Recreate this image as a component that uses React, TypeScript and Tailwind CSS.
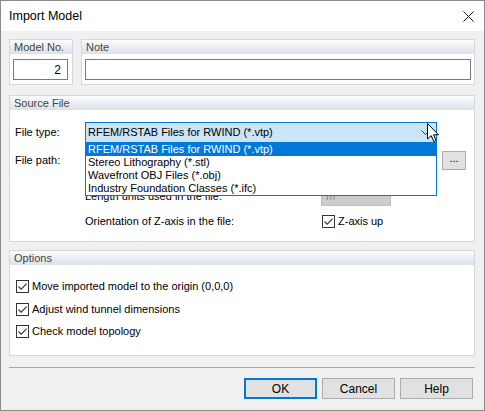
import React from 'react';

const FONT = "font-['Liberation_Sans',Arial,sans-serif]";

const LIST_ITEMS = [
  'RFEM/RSTAB Files for RWIND (*.vtp)',
  'Stereo Lithography (*.stl)',
  'Wavefront OBJ Files (*.obj)',
  'Industry Foundation Classes (*.ifc)',
] as const;

const OPTIONS = [
  'Move imported model to the origin (0,0,0)',
  'Adjust wind tunnel dimensions',
  'Check model topology',
] as const;

function GroupBox({
  title,
  className,
  children,
}: {
  title: string;
  className?: string;
  children?: React.ReactNode;
}) {
  return (
    <div className={`flex flex-col border border-[#d3d8df] bg-white ${className ?? ''}`}>
      <div className="h-[14px] shrink-0 bg-gradient-to-b from-[#fbfcfd] to-[#dbe1ea] px-[4px] text-[11px] leading-[14px] text-[#444]">
        {title}
      </div>
      {children}
    </div>
  );
}

function CheckBox() {
  return (
    <span className="flex h-[13px] w-[13px] shrink-0 items-center justify-center border border-[#333] bg-white">
      <svg width="11" height="11" viewBox="0 0 11 11">
        <path d="M1.5 5.5 L4.2 8.2 L9.6 2.6" fill="none" stroke="#333" strokeWidth="1.1" />
      </svg>
    </span>
  );
}

function Button({ label, primary }: { label: string; primary?: boolean }) {
  return (
    <button
      className={`h-[21px] w-[73px] bg-[#e1e1e1] text-[12px] text-black ${
        primary ? 'border-2 border-[#0078d7]' : 'border border-[#adadad]'
      }`}
    >
      {label}
    </button>
  );
}

export default function App() {
  return (
    <div
      className={`relative flex h-[411px] w-[485px] flex-col border border-[#8c8c8c] bg-[#f0f0f0] text-[11px] text-black ${FONT}`}
    >
      {/* title bar */}
      <div className="flex h-[30px] shrink-0 items-center justify-between bg-white pl-[8px] pr-[10px]">
        <span className="text-[12.5px] text-black">Import Model</span>
        <svg width="11" height="11" viewBox="0 0 11 11">
          <path d="M0.5 0.5 L10.5 10.5 M10.5 0.5 L0.5 10.5" stroke="#111" strokeWidth="1" />
        </svg>
      </div>

      <div className="flex flex-col pl-[8px] pr-[9px] pt-[8px]">
        <div className="flex gap-[8px]">
          <GroupBox title="Model No." className="h-[46px] w-[64px]">
            <div className="px-[3px] pt-[5px]">
              <div className="flex h-[21px] w-[55px] items-center justify-end border border-[#7a7a7a] bg-white pr-[6px] text-[12px]">
                2
              </div>
            </div>
          </GroupBox>
          <GroupBox title="Note" className="h-[46px] flex-1">
            <div className="px-[3px] pt-[5px]">
              <div className="h-[21px] w-full border border-[#7a7a7a] bg-white" />
            </div>
          </GroupBox>
        </div>

        <GroupBox title="Source File" className="mt-[10px] h-[147px]">
          <div className="flex flex-col pl-[5px]">
            <div className="mt-[12px] flex items-center">
              <span className="w-[70px]">File type:</span>
              <div className="relative h-[21px] w-[352px]">
                <div className="flex h-full items-center border border-[#0078d7] bg-[#cce4f7] pl-[2px]">
                  RFEM/RSTAB Files for RWIND (*.vtp)
                </div>
                <svg className="absolute left-[336px] top-[8px]" width="9" height="6" viewBox="0 0 9 6">
                  <path d="M0.5 0.5 L4.5 4.5 L8.5 0.5" fill="none" stroke="#333" strokeWidth="1" />
                </svg>
                {/* open dropdown list */}
                <div className="absolute left-0 top-[20px] z-10 flex w-full flex-col border border-[#0078d7] bg-white">
                  {LIST_ITEMS.map((item, i) => (
                    <div
                      key={`list-item-${item}`}
                      className={`h-[13px] pl-[2px] leading-[13px] ${
                        i === 0 ? 'bg-[#0078d7] text-white' : 'text-black'
                      }`}
                    >
                      {item}
                    </div>
                  ))}
                </div>
              </div>
            </div>

            <div className="mt-[7px] flex items-center">
              <span className="w-[70px]">File path:</span>
              <div className="h-[20px] w-[352px] border border-[#7a7a7a] bg-white" />
              <div className="ml-[5px] flex h-[19px] w-[24px] items-center justify-center border border-[#adadad] bg-[#e1e1e1] pb-[3px]">
                ...
              </div>
            </div>

            <div className="mt-[17px] flex items-center pl-[70px]">
              <span className="w-[236px]">Length units used in the file:</span>
              <div className="flex h-[19px] w-[70px] items-center border border-[#bfbfbf] bg-[#cccccc] pl-[4px] text-[#8a8a8a]">
                m
              </div>
            </div>

            <div className="mt-[7px] flex items-center pl-[70px]">
              <span className="w-[237px]">Orientation of Z-axis in the file:</span>
              <CheckBox />
              <span className="ml-[3px]">Z-axis up</span>
            </div>
          </div>
        </GroupBox>

        <GroupBox title="Options" className="mt-[8px] h-[106px]">
          <div className="flex flex-col gap-[9.5px] pl-[6px] pt-[15px]">
            {OPTIONS.map((label) => (
              <div key={`option-${label}`} className="flex h-[13px] items-center leading-[13px]">
                <CheckBox />
                <span className="ml-[3px]">{label}</span>
              </div>
            ))}
          </div>
        </GroupBox>

        <div className="mt-[11px] h-px bg-[#a9a9a9]" />

        <div className="mt-[10px] flex justify-end gap-[5px] pr-[2px]">
          <Button label="OK" primary />
          <Button label="Cancel" />
          <Button label="Help" />
        </div>
      </div>

      {/* mouse pointer over the combo arrow */}
      <svg
        className="absolute left-[426px] top-[122px] z-20"
        width="13"
        height="20"
        viewBox="0 0 13 20"
      >
        <path
          d="M0.5 0.5 L0.5 16 L4.2 12.6 L6.8 18.6 L9 17.6 L6.5 11.8 L11.5 11.8 Z"
          fill="#fff"
          stroke="#000"
          strokeWidth="1"
          strokeLinejoin="miter"
        />
      </svg>
    </div>
  );
}
